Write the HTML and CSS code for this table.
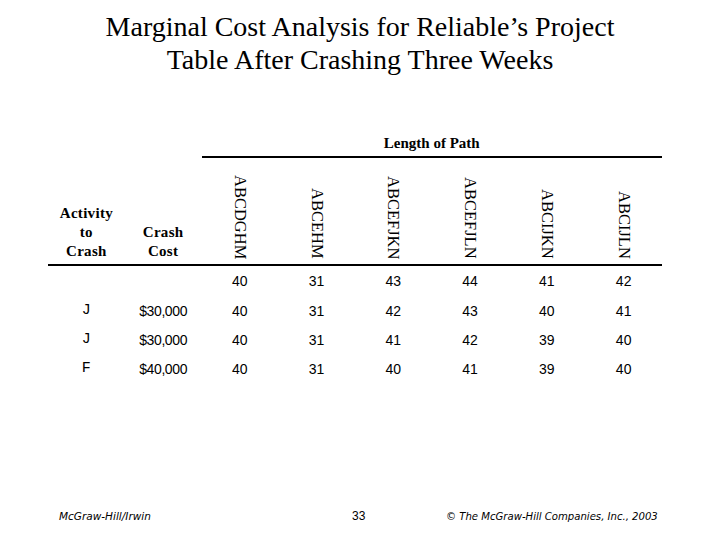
FILE: index.html
```html
<!DOCTYPE html>
<html>
<head>
<meta charset="utf-8">
<link rel="stylesheet" href="styles.css">
</head>
<body>
<div class="slide">
  <h1 class="title">Marginal Cost Analysis for Reliable’s Project<br>Table After Crashing Three Weeks</h1>
  <table class="grid">
    <colgroup>
      <col class="c"><col class="c"><col class="c"><col class="c"><col class="c"><col class="c"><col class="c"><col class="c">
    </colgroup>
    <thead>
      <tr class="group-row">
        <th></th><th></th>
        <th colspan="6" class="group">Length of Path</th>
      </tr>
      <tr class="head-row">
        <th class="label">Activity<br>to<br>Crash</th>
        <th class="label">Crash<br>Cost</th>
        <th class="path"><span class="vert">ABCDGHM</span></th>
        <th class="path"><span class="vert">ABCEHM</span></th>
        <th class="path"><span class="vert">ABCEFJKN</span></th>
        <th class="path"><span class="vert">ABCEFJLN</span></th>
        <th class="path"><span class="vert">ABCIJKN</span></th>
        <th class="path"><span class="vert">ABCIJLN</span></th>
      </tr>
    </thead>
    <tbody>
      <tr class="first">
        <td class="act"></td><td class="cost"></td>
        <td>40</td><td>31</td><td>43</td><td>44</td><td>41</td><td>42</td>
      </tr>
      <tr>
        <td class="act">J</td><td class="cost">$30,000</td>
        <td>40</td><td>31</td><td>42</td><td>43</td><td>40</td><td>41</td>
      </tr>
      <tr>
        <td class="act">J</td><td class="cost">$30,000</td>
        <td>40</td><td>31</td><td>41</td><td>42</td><td>39</td><td>40</td>
      </tr>
      <tr>
        <td class="act">F</td><td class="cost">$40,000</td>
        <td>40</td><td>31</td><td>40</td><td>41</td><td>39</td><td>40</td>
      </tr>
    </tbody>
  </table>
  <div class="footer">
    <span class="pub">McGraw-Hill/Irwin</span>
    <span class="page">33</span>
    <span class="copy">© The McGraw-Hill Companies, Inc., 2003</span>
  </div>
</div>
</body>
</html>
```
FILE: styles.css
```css
html, body {
  margin: 0;
  padding: 0;
  background: #ffffff;
}
.slide {
  width: 720px;
  height: 540px;
  position: relative;
  color: #000000;
  font-family: "Liberation Serif", "Times New Roman", serif;
}
.title {
  margin: 0;
  padding-top: 10px;
  font-weight: normal;
  font-size: 28px;
  line-height: 33px;
  text-align: center;
}
.grid {
  margin: 58px 0 0 48px;
  border-collapse: collapse;
  table-layout: fixed;
  width: 614px;
}
.grid col.c {
  width: 76.75px;
}
.grid th, .grid td {
  padding: 0;
}
.group-row th {
  height: 18px;
}
.group {
  font-weight: bold;
  font-size: 15px;
  line-height: 18px;
  text-align: center;
  vertical-align: bottom;
  border-bottom: 2px solid #000;
  padding-bottom: 4px !important;
}
.head-row th {
  height: 104px;
  border-bottom: 2px solid #000;
  vertical-align: bottom;
}
.label {
  font-weight: bold;
  font-size: 15px;
  line-height: 19px;
  letter-spacing: 0.3px;
  text-align: center;
  padding-bottom: 3px !important;
}
.path {
  text-align: center;
  padding-bottom: 1px !important;
}
.vert {
  display: inline-block;
  writing-mode: vertical-rl;
  font-weight: normal;
  font-size: 16.5px;
  line-height: 14px;
}
.grid td {
  height: 29px;
  text-align: center;
  vertical-align: middle;
  font-family: "Liberation Sans", Arial, sans-serif;
  font-size: 14px;
}
.grid tr.first td {
  height: 30px;
}
.grid td.cost {
  letter-spacing: -0.4px;
}
.grid td.act {
  font-family: "Liberation Mono", "Courier New", monospace;
  font-size: 15px;
}
.footer {
  position: absolute;
  left: 59px;
  top: 509px;
  display: grid;
  grid-template-columns: 293px 94px auto;
  align-items: baseline;
  font-family: "DejaVu Sans", Verdana, sans-serif;
  font-size: 10.5px;
  line-height: 14px;
}
.pub, .copy {
  font-style: italic;
}
.copy {
  font-size: 10.1px;
}
.page {
  font-family: "Liberation Sans", Arial, sans-serif;
  font-size: 12px;
}
```
